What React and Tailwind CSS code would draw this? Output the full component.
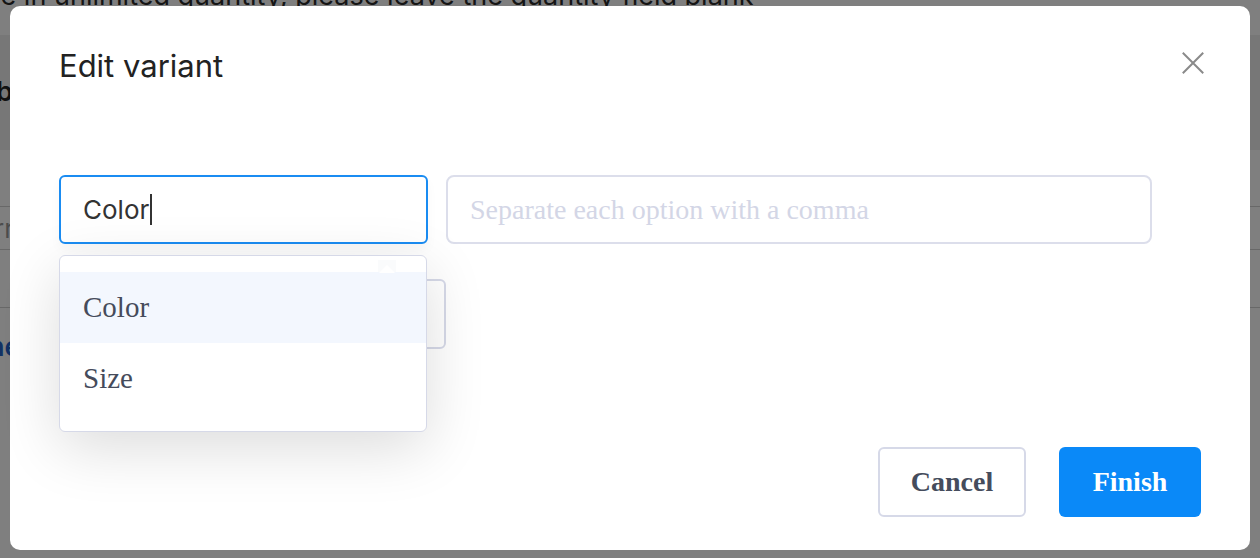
import React from "react";

export default function App() {
  return (
    <div className="relative h-[558px] w-[1260px] overflow-hidden bg-white font-['Inter','Noto_Sans',sans-serif]">
      {/* underlying page */}
      <div className="flex flex-col">
        <p className="-mt-[22px] -ml-[6px] h-[35px] whitespace-nowrap text-[27px] leading-[35px] text-[#2a2a2a]">
          le in unlimited quantity, please leave the quantity field blank
        </p>
        <div className="mt-[22px] flex h-[115px] items-center bg-[#efefef]">
          <span className="-ml-[4px] text-[27px] font-semibold text-[#222]">bo</span>
        </div>
        <div className="h-[57px] border-b border-[#d0d0d0]" />
        <div className="flex h-[43px] items-center border-b border-[#d0d0d0]">
          <span className="-ml-[6px] text-[26px] text-[#999]">rr</span>
        </div>
        <div className="h-[58px] border-b border-[#d0d0d0]" />
        <div className="mt-[22px] flex items-center">
          <span className="-ml-[12px] text-[27px] font-semibold leading-[34px] text-[#2563c9]">ne</span>
        </div>
      </div>

      {/* overlay */}
      <div className="absolute inset-0 bg-black/50" />

      {/* modal */}
      <div className="absolute left-[10px] top-[6px] flex h-[544px] w-[1240px] flex-col rounded-[10px] bg-white">
        <div className="flex items-start justify-between pl-[49px] pr-[45px] pt-[41px]">
          <h2 className="text-[31px] font-normal leading-[38px] text-[#222]">Edit variant</h2>
          <button className="mt-[4px] flex h-[24px] w-[24px] items-center justify-center text-[#8a8a8a]">
            <svg width="22" height="22" viewBox="0 0 22 22" fill="none" stroke="currentColor" strokeWidth="2" strokeLinecap="square">
              <path d="M1.5 1.5 L20.5 20.5 M20.5 1.5 L1.5 20.5" />
            </svg>
          </button>
        </div>

        <div className="relative mt-[90px] flex gap-[18px] pl-[49px]">
          <div className="flex h-[69px] w-[369px] items-center rounded-[6px] border-2 border-[#1a8cf2] bg-white pl-[22px] shadow-[0_6px_12px_rgba(0,0,0,0.03)]">
            <span className="text-[26px] text-[#333]">Color</span>
            <span className="ml-[1px] h-[31px] w-[2px] bg-[#333]" />
          </div>
          <div className="flex h-[69px] w-[706px] items-center rounded-[8px] border-2 border-[#dcdeeb] bg-white pl-[22px]">
            <span className="font-['Liberation_Serif',serif] text-[28px] text-[#d3d6e6]">
              Separate each option with a comma
            </span>
          </div>
        </div>

        <div className="mt-[35px] pl-[49px]">
          <div className="ml-[180px] h-[70px] w-[207px] rounded-[6px] border-2 border-[#d6d9e8] bg-white" />
        </div>

        {/* dropdown */}
        <div className="absolute left-[49px] top-[249px] w-[368px] rounded-[6px] border-[1.5px] border-[#d6d9e8] bg-white py-[16px] shadow-[0_16px_60px_rgba(0,0,0,0.14)]">
          <div className="relative">
            <div className="absolute -top-[12px] left-[318px] h-[12px] w-[18px] bg-[#fafbfc]" />
            <svg className="absolute -top-[7px] left-[319px]" width="16" height="8" viewBox="0 0 16 8">
              <path d="M0 8 L8 0 L16 8 Z" fill="#ffffff" />
            </svg>
            <div className="flex h-[71px] items-center bg-[#f3f7fe] pl-[23px] font-['Liberation_Serif',serif] text-[29px] text-[#454b5b]">
              Color
            </div>
            <div className="flex h-[72px] items-center pl-[23px] font-['Liberation_Serif',serif] text-[29px] text-[#454b5b]">
              Size
            </div>
          </div>
        </div>

        <div className="mt-auto flex justify-end gap-[33px] pb-[33px] pr-[49px]">
          <button className="flex h-[70px] w-[148px] items-center justify-center rounded-[6px] border-2 border-[#d6d9e8] bg-white font-['Liberation_Serif',serif] text-[28px] font-bold text-[#454c5c]">
            Cancel
          </button>
          <button className="flex h-[70px] w-[142px] items-center justify-center rounded-[6px] bg-[#0a89f8] font-['Liberation_Serif',serif] text-[28px] font-bold text-white">
            Finish
          </button>
        </div>
      </div>
    </div>
  );
}
